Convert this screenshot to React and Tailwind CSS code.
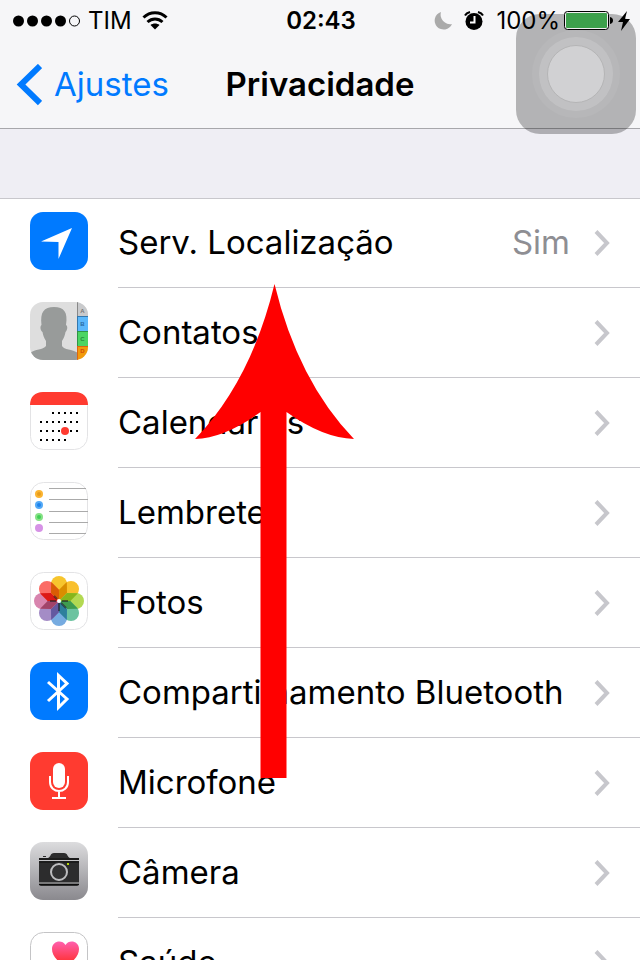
import React from 'react'

const LocationIcon = () => (
    <svg viewBox="0 0 58 58" className="size-[58px]" aria-hidden="true">
        <rect width="58" height="58" rx="13" fill="#007aff" />
        <path d="M11 29.5 42 16 28.5 47V30Z" fill="#fff" />
    </svg>
)

const ContactsIcon = () => (
    <svg viewBox="0 0 58 58" className="size-[58px]" aria-hidden="true">
        <defs>
            <clipPath id="contacts"><rect width="58" height="58" rx="13" /></clipPath>
        </defs>
        <g clipPath="url(#contacts)">
            <rect width="58" height="58" fill="#dedede" />
            <path d="M0 58V51C5 47 13 48 16 44V39C14 36 13 33 12.500 30C10 28 10 24 11.500 23C10 10 14 5 24 5S38 10 36 23C38 24 37.500 28 35.500 30C35 33 34 36 32 39V44C34 48 42 47 48 51V58Z" fill="#989b9a" />
            <rect x="47" width="11" height="14" fill="#c9cacc" />
            <rect x="47" y="14" width="11" height="15" fill="#5cb8fb" />
            <rect x="47" y="29" width="11" height="15" fill="#4cd563" />
            <rect x="47" y="44" width="11" height="14" fill="#f29a0b" />
            <path d="M47.500 0V14" stroke="#888" />
            <path d="M47.500 14V29M47 14.500H58" stroke="#3377ad" />
            <path d="M47.500 29V44M47 29.500H58" stroke="#319446" />
            <path d="M47.500 44V58M47 44.500H58" stroke="#dd6510" />
            <g fontSize="6" fontFamily="Liberation Sans, sans-serif" fontWeight="bold" textAnchor="middle">
                <text x="52.500" y="11" fill="#777">A</text>
                <text x="52.500" y="24" fill="#2b6ba3">B</text>
                <text x="52.500" y="39" fill="#248a3a">C</text>
                <text x="52.500" y="51" fill="#d0480c">D</text>
            </g>
        </g>
    </svg>
)

const calendarDots = [
    [22, 20], [28, 20], [34, 20], [40, 20], [46, 20],
    [10, 29], [16, 29], [22, 29], [28, 29], [34, 29], [40, 29], [46, 29],
    [10, 38], [16, 38], [22, 38], [28, 38], [40, 38], [46, 38],
    [10, 47], [16, 47], [22, 47], [28, 47], [34, 47],
]

const CalendarIcon = () => (
    <svg viewBox="0 0 58 58" className="size-[58px]" aria-hidden="true">
        <rect x="0.500" y="0.500" width="57" height="57" rx="13" fill="#fff" stroke="#e3e3e5" />
        <path d="M0 13C0 5 5 0 13 0H45C53 0 58 5 58 13Z" fill="#ff3b30" />
        {calendarDots.map(([x, y]) => (
            <rect key={`${x}-${y}`} x={x} y={y} width="2" height="2" fill="#000" />
        ))}
        <circle cx="35" cy="39" r="4" fill="#ff3b30" />
    </svg>
)

const RemindersIcon = () => (
    <svg viewBox="0 0 58 58" className="size-[58px]" aria-hidden="true">
        <rect x="0.500" y="0.500" width="57" height="57" rx="13" fill="#fff" stroke="#e3e3e5" />
        <path d="M19 6.500H56M19 17.500H58M19 29.500H58M19 40.500H58M19 51.500H56" stroke="#aaa" />
        <circle cx="9" cy="12" r="4" fill="#fbb431" />
        <circle cx="9" cy="12" r="2" fill="#e79c1c" />
        <circle cx="9" cy="23" r="4" fill="#53a9f6" />
        <circle cx="9" cy="23" r="2" fill="#1e83ec" />
        <circle cx="9" cy="35" r="4" fill="#86e185" />
        <circle cx="9" cy="35" r="2" fill="#3fcf55" />
        <circle cx="9" cy="46" r="4" fill="#d692e6" />
    </svg>
)

const petals = [
    [0, '#f7c52d'],
    [45, '#f9c02e'],
    [90, '#b3d952'],
    [135, '#6cc3a0'],
    [180, '#76abe0'],
    [225, '#a48cc6'],
    [270, '#d884ae'],
    [315, '#fb6c66'],
]

const folds = [
    [22.5, '#d98d00'],
    [67.5, '#87b51b'],
    [112.5, '#3f9c50'],
    [157.5, '#2d7f9c'],
    [202.5, '#6359a0'],
    [247.5, '#a14369'],
    [292.5, '#dc1916'],
    [337.5, '#da5c05'],
]

const PhotosIcon = () => (
    <svg viewBox="0 0 58 58" className="size-[58px]" aria-hidden="true">
        <rect x="0.500" y="0.500" width="57" height="57" rx="13" fill="#fff" stroke="#e3e3e5" />
        {petals.map(([angle, color]) => (
            <rect key={angle} x="21" y="4" width="16" height="25" rx="8" fill={color} transform={`rotate(${angle} 29 29)`} />
        ))}
        {folds.map(([angle, color]) => (
            <path key={angle} d="M29 29 24.700 18.500 29 8.500 33.300 18.500Z" fill={color} transform={`rotate(${angle} 29 29)`} />
        ))}
        <path d="M29 31V39M31 31 36 36M20 29H26M32 29H38M24 24 27 27" stroke="#222" strokeOpacity="0.6" strokeWidth="2" />
        <circle cx="29" cy="29" r="2" fill="#fff" />
    </svg>
)

const BluetoothIcon = () => (
    <svg viewBox="0 0 58 58" className="size-[58px]" aria-hidden="true">
        <rect width="58" height="58" rx="13" fill="#007aff" />
        <path d="M18 20 37 37 28.500 45.500V13.500L37 21.500 18 39" fill="none" stroke="#fff" strokeWidth="3" />
    </svg>
)

const MicrophoneIcon = () => (
    <svg viewBox="0 0 58 58" className="size-[58px]" aria-hidden="true">
        <rect width="58" height="58" rx="13" fill="#ff3b30" />
        <rect x="23" y="11" width="12" height="25" rx="6" fill="#fff" />
        <path d="M20 24V30C20 42 38 42 38 30V24M29 39V46M22 46H36" fill="none" stroke="#fff" strokeWidth="2" />
    </svg>
)

const CameraIcon = () => (
    <svg viewBox="0 0 58 58" className="size-[58px]" aria-hidden="true">
        <defs>
            <linearGradient id="camera" x1="0" y1="0" x2="0" y2="1">
                <stop offset="0" stopColor="#dcdcde" />
                <stop offset="1" stopColor="#8a898e" />
            </linearGradient>
        </defs>
        <rect width="58" height="58" rx="13" fill="url(#camera)" />
        <path d="M13 14H16V15H13ZM9 16H18C21 15 20 11 24 11H34C38 11 37 15 40 16H49V42C49 43 48 44 47 44H11C10 44 9 43 9 42Z" fill="#2c2c2d" />
        <path d="M9 18.500H49M9 41H49" stroke="#c4c4c6" />
        <path d="M9 17H49M9 20H49M9 42.500H49" stroke="#0c0c0c" />
        <circle cx="29" cy="30" r="10" fill="#2c2c2d" />
        <circle cx="29" cy="30" r="8" fill="#323233" stroke="#bdbdbf" strokeWidth="2" />
        <rect x="37" y="21" width="2" height="2" fill="#b6d80b" />
    </svg>
)

const HealthIcon = () => (
    <svg viewBox="0 0 58 58" className="size-[58px]" aria-hidden="true">
        <defs>
            <linearGradient id="health" x1="0" y1="0" x2="0" y2="1">
                <stop offset="0" stopColor="#ff5fae" />
                <stop offset="1" stopColor="#ff2719" />
            </linearGradient>
        </defs>
        <rect x="0.500" y="0.500" width="57" height="57" rx="13" fill="#fff" stroke="#c4c4c6" />
        <path d="M35.500 35C26 28 22 23 22 17C22 9 32 7 35.500 13C39 7 49 9 49 17C49 23 45 28 35.500 35Z" fill="url(#health)" />
    </svg>
)

const items = [
    { label: 'Serv. Localização', value: 'Sim', icon: LocationIcon },
    { label: 'Contatos', icon: ContactsIcon },
    { label: 'Calendários', icon: CalendarIcon },
    { label: 'Lembretes', icon: RemindersIcon },
    { label: 'Fotos', icon: PhotosIcon },
    { label: 'Compartilhamento Bluetooth', icon: BluetoothIcon },
    { label: 'Microfone', icon: MicrophoneIcon },
    { label: 'Câmera', icon: CameraIcon },
    { label: 'Saúde', icon: HealthIcon },
]

const StatusBar = () => (
    <div className="relative z-10 grid h-10 grid-cols-[1fr_auto_1fr] items-center pl-3 pr-2.5 pt-0.5 text-2xl pointer-events-none">
        <div className="flex items-center">
            <svg viewBox="0 0 68 12" className="h-3 w-[68px]" aria-hidden="true">
                <circle cx="6.500" cy="6" r="5.500" />
                <circle cx="20.500" cy="6" r="5.500" />
                <circle cx="34.500" cy="6" r="5.500" />
                <circle cx="48.500" cy="6" r="5.500" />
                <circle cx="62.500" cy="6" r="5" fill="none" stroke="#000" />
            </svg>
            <span className="ml-2">TIM</span>
            <svg viewBox="0 0 26 20" className="ml-2.5 h-5 w-[26px]" fill="none" stroke="#000" strokeWidth="3" aria-hidden="true">
                <path d="M1.500 6.500C8 0 18 0 24.500 6.500M5.500 11C10 7 16 7 20.500 11" />
                <path d="M13 18.500 8.500 14C11 12 15 12 17.500 14Z" fill="#000" stroke="none" />
            </svg>
        </div>
        <span className="font-semibold">02:43</span>
        <div className="flex items-center justify-end">
            <svg viewBox="0 0 18 18" className="size-[18px]" aria-hidden="true">
                <path d="M7 0A9 9 0 1 0 18 12A9.500 9.500 0 0 1 7 0Z" fill="#aaa" />
            </svg>
            <svg viewBox="0 0 20 20" className="ml-3 size-5" aria-hidden="true">
                <circle cx="10" cy="10.500" r="8.500" />
                <path d="M1 4.500C2 2.500 4 1.500 6 1M14 1C16 1.500 18 2.500 19 4.500" fill="none" stroke="#000" strokeWidth="2" />
                <path d="M10.500 5V11.500H6" fill="none" stroke="#fff" strokeWidth="2" />
            </svg>
            <span className="ml-3">100%</span>
            <svg viewBox="0 0 50 20" className="ml-1 h-5 w-[50px]" aria-hidden="true">
                <rect x="0.500" y="0.500" width="44" height="18" rx="3" fill="#eee" stroke="#000" />
                <rect x="2" y="2" width="41" height="15" rx="1" fill="#3ca04b" />
                <path d="M46 6C50 6.500 50 12.500 46 13Z" />
            </svg>
            <svg viewBox="0 0 12 20" className="ml-1 h-5 w-3" aria-hidden="true">
                <path d="M9 0 0 11H5L3 20 12 8H7Z" />
            </svg>
        </div>
    </div>
)

const ListItem = ({ label, value, icon: Icon }) => (
    <li>
        <a href="#" className="flex pl-[30px]">
            <span className="mr-[30px] shrink-0 pt-[14px]"><Icon /></span>
            <span className="flex h-[90px] flex-1 items-center border-b border-[#c8c7cc] pr-[30px]">
                <span className="flex-1 whitespace-nowrap text-[33px]">{label}</span>
                {value && <span className="mr-6 text-[33px] text-[#8e8e93]">{value}</span>}
                <svg viewBox="0 0 16 26" className="h-[26px] w-4" fill="none" stroke="#c7c7cc" strokeWidth="4" aria-hidden="true">
                    <path d="M2 1.500 13 13 2 24.500" />
                </svg>
            </span>
        </a>
    </li>
)

const App = () => {
    return (
        <div className="relative h-screen overflow-hidden bg-white font-['Inter',sans-serif] text-black">
            <header className="border-b border-[#a7a7ab] bg-[#f6f6f8]">
                <StatusBar />
                <nav className="grid h-[88px] grid-cols-[1fr_auto_1fr] items-center px-4 pt-0.5">
                    <a href="#" className="flex items-center text-[33px] text-[#007aff]">
                        <svg viewBox="0 0 26 42" className="mr-3 h-[42px] w-[26px]" fill="none" stroke="#007aff" strokeWidth="6" aria-hidden="true">
                            <path d="M24 2 5 20.500 24 39" />
                        </svg>
                        Ajustes
                    </a>
                    <h1 className="text-[33px] font-semibold">Privacidade</h1>
                </nav>
            </header>
            <main className="bg-[#efeef4] pt-[69px]">
                <ul className="bg-white shadow-[inset_0_1px_0_#c8c7cc]">
                    {items.map((item) => (
                        <ListItem key={item.label} {...item} />
                    ))}
                </ul>
            </main>

            <button type="button" aria-label="AssistiveTouch" className="absolute right-1 top-[14px] flex size-[120px] items-center justify-center rounded-3xl bg-black/27">
                <span className="flex size-[88px] items-center justify-center rounded-full bg-white/5">
                    <span className="flex size-[74px] items-center justify-center rounded-full bg-white/15">
                        <span className="size-[58px] rounded-full border border-[#b5b5b6] bg-[#d1d1d3]"></span>
                    </span>
                </span>
            </button>

            <svg viewBox="0 0 159 494" className="pointer-events-none absolute left-[195px] top-[284px] h-[494px] w-[159px]" aria-hidden="true">
                <path d="M79.500 0Q56 97 0 155Q30 154 65.500 128V494H91.500V128Q128 154 159 155Q103 97 79.500 0Z" fill="#f00" />
            </svg>
        </div>
    )
}

export default App
